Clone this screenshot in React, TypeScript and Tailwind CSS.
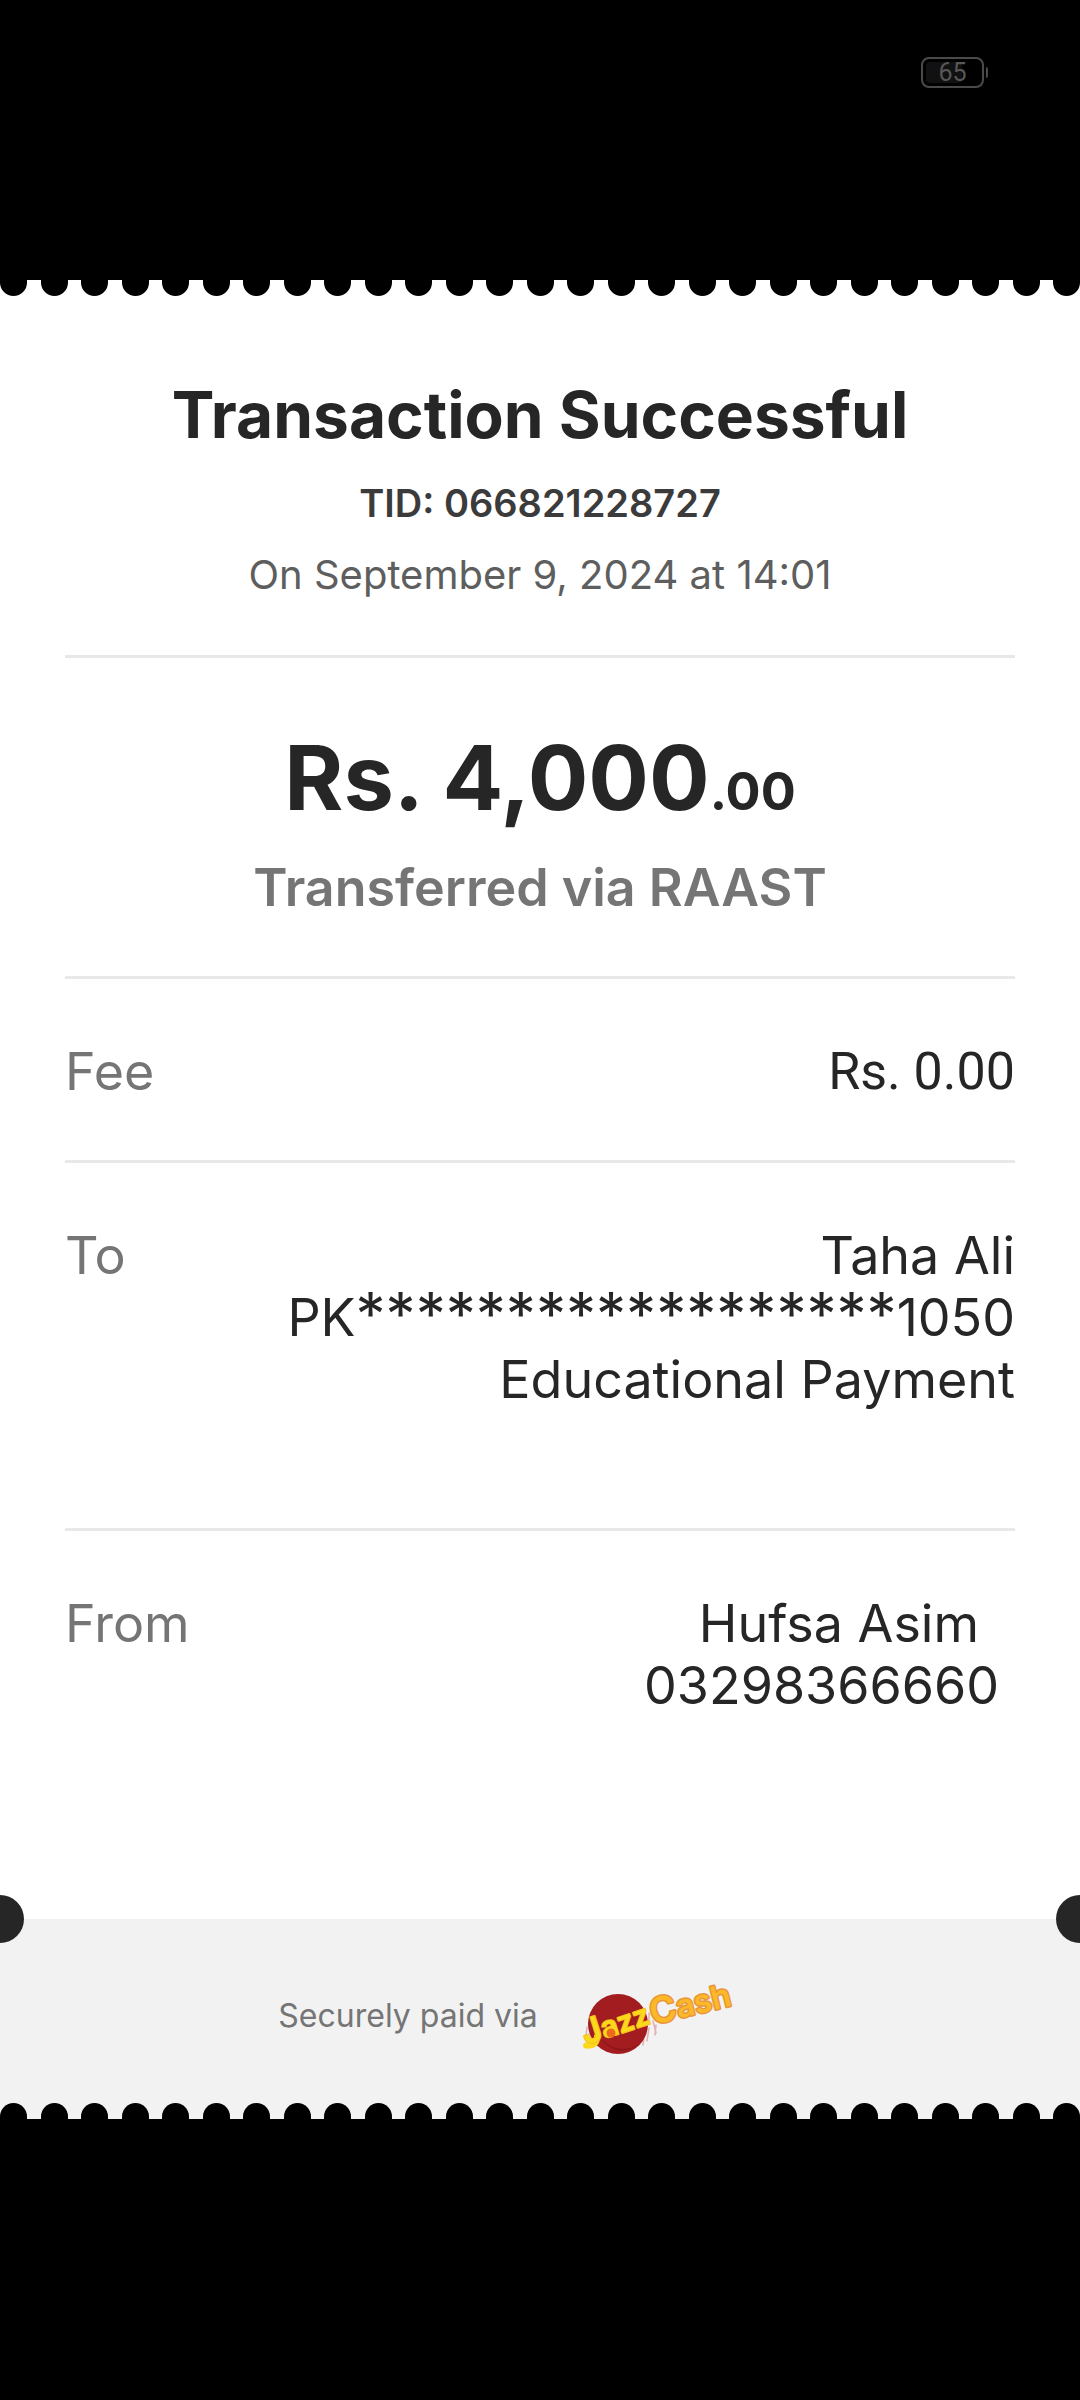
import type { ReactNode } from "react";

const SCALLOPS = Array.from({ length: 27 }, (_, i) => i);

function Scallops({ edge }: { edge: "top" | "bottom" }) {
  return (
    <div aria-hidden="true" className="flex h-4 justify-between">
      {SCALLOPS.map((i) => (
        <span
          key={i}
          className={
            edge === "top"
              ? "h-4 w-[27px] rounded-b-full bg-black"
              : "h-4 w-[27px] rounded-t-full bg-black"
          }
        />
      ))}
    </div>
  );
}

function Battery() {
  return (
    <div className="flex items-center gap-0.5" aria-label="Battery 65 percent">
      <div className="relative flex h-[31px] w-[63px] items-center justify-center rounded-lg border-2 border-[#4a4a4a]">
        <span className="absolute inset-y-[3px] left-[3px] w-9 rounded-sm bg-[#111111]" />
        <span className="relative font-[Roboto,sans-serif] text-[25px] leading-none text-[#575757]">65</span>
      </div>
      <span className="h-[11px] w-0.5 rounded-r bg-[#4a4a4a]" />
    </div>
  );
}

function Logo() {
  return (
    <svg viewBox="0 0 180 110" className="h-[110px] w-[180px]" role="img" aria-label="JazzCash">
      <g fill="none" stroke="#e3aeb4" strokeWidth="1.5" strokeLinecap="round">
        <path d="M17 66 L16 76 M79 52 L79 59 M74 76 L73 84 M79 67 L77 80 M83 60 L86 72 M86 64 L85 74" />
      </g>
      <circle cx="48" cy="63" r="30" fill="#a31c1f" />
      <path d="M30 76 A25 25 0 0 0 70 82 A28 28 0 0 1 30 76" fill="#8d1519" />
      <g fontFamily="Inter, sans-serif" strokeLinejoin="round">
        <g transform="rotate(-18 18 84)">
          <path d="M29 79 Q27 88 16 84" fill="none" stroke="#fbd81c" strokeWidth="6" strokeLinecap="round" />
          <text
            x="16"
            y="83"
            fontSize="29"
            fontWeight="600"
            fill="#fbd81c"
            stroke="#f6bf1e"
            strokeWidth="2"
            paintOrder="stroke"
          >
            <tspan fontSize="34">J</tspan>azz
          </text>
        </g>
        <circle cx="41" cy="72" r="4.5" fill="#ee6a1d" />
        <text
          x="83"
          y="64"
          fontSize="32"
          fontWeight="600"
          fill="#fcb827"
          stroke="#e8963a"
          strokeWidth="3"
          paintOrder="stroke"
          transform="rotate(-14 83 64)"
        >
          <tspan fontSize="36">C</tspan>ash
        </text>
      </g>
    </svg>
  );
}

function Row({ label, children, last }: { label: string; children: ReactNode; last?: boolean }) {
  return (
    <div
      className={
        last
          ? "flex justify-between pt-[62px] text-[52px] leading-[62px]"
          : "flex justify-between border-b-[3px] border-[#e8e8e8] pt-[62px] text-[52px] leading-[62px]"
      }
    >
      <dt className="text-[#757575]">{label}</dt>
      <dd className="text-right text-[#262626]">{children}</dd>
    </div>
  );
}

export default function App() {
  return (
    <div className="min-h-screen bg-black font-[Inter,sans-serif]">
      <header className="flex h-[280px] items-start justify-end pt-[57px] pr-[92px]">
        <Battery />
      </header>

      <main className="overflow-hidden bg-white">
        <Scallops edge="top" />
        <div className="px-[65px]">
          <section className="border-b-[3px] border-[#e8e8e8] pt-[83px] pb-11 text-center">
            <h1 className="text-[64px] leading-[72px] font-bold text-[#262626]">Transaction Successful</h1>
            <p className="mt-4 text-[38px] leading-[72px] font-semibold text-[#3b3b3b]">TID: 066821228727</p>
            <p className="text-[40px] leading-[72px] text-[#5e5e5e]">On September 9, 2024 at 14:01</p>
          </section>

          <section className="border-b-[3px] border-[#e8e8e8] pt-[72px] pb-14 text-center">
            <p className="text-[90px] leading-[96px] font-bold text-[#262626]">
              Rs. 4,000<span className="text-[52px] leading-none">.00</span>
            </p>
            <p className="mt-[30px] text-[52px] leading-[64px] font-semibold text-[#757575]">
              Transferred via RAAST
            </p>
          </section>

          <dl>
            <Row label="Fee">
              <span className="block pb-[57px] font-[Roboto,sans-serif]">Rs. 0.00</span>
            </Row>
            <Row label="To">
              <span className="block">Taha Ali</span>
              <span className="block">
                PK<span className="text-[60px] leading-[40px]">******************</span>1050
              </span>
              <span className="block pb-[117px]">Educational Payment</span>
            </Row>
            <Row label="From" last>
              <span className="block pr-9">Hufsa Asim</span>
              <span className="block pr-4 pb-[202px]">03298366660</span>
            </Row>
          </dl>
        </div>

        <footer className="relative bg-[#f2f2f2]">
          <span className="absolute -top-6 -left-6 size-12 rounded-full bg-[#262626]" />
          <span className="absolute -top-6 -right-6 size-12 rounded-full bg-[#262626]" />
          <div className="flex items-center justify-center gap-8 pt-[42px] pr-[52px] pb-8">
            <p className="text-[32px] text-[#757575]">Securely paid via</p>
            <Logo />
          </div>
          <Scallops edge="bottom" />
        </footer>
      </main>
    </div>
  );
}
